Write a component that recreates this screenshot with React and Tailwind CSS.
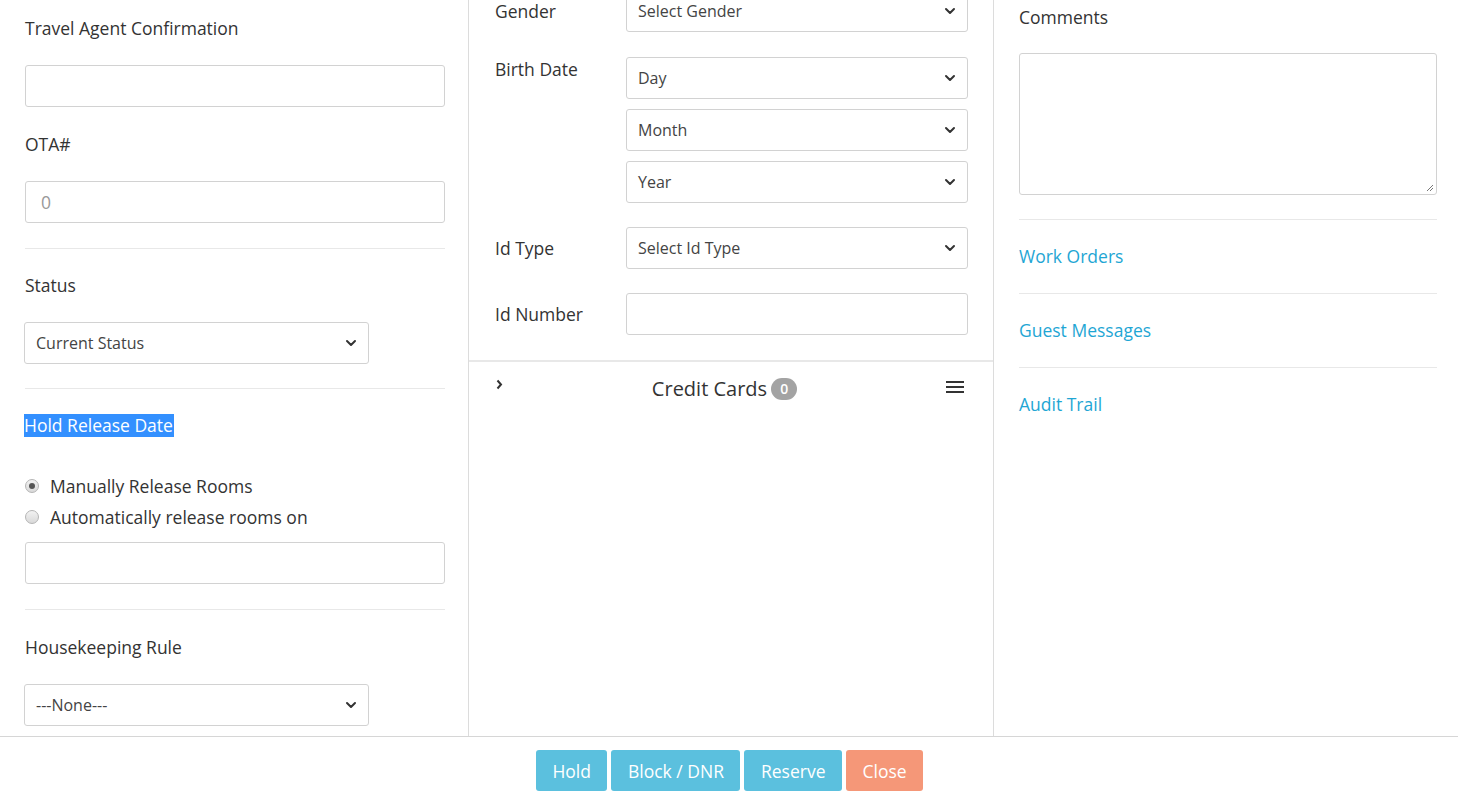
import { ChevronDown } from "lucide-react"

const font = { fontFamily: "'Open Sans', sans-serif" }

const Select = ({ label, className = "" }) => (
  <div className={"relative h-[42px] border border-[#d2d2d2] rounded-[3px] bg-white flex items-center pl-[11px] text-[16px] text-[#444] " + className}>
    <span>{label}</span>
    <ChevronDown className="absolute right-[9px] top-1/2 -translate-y-1/2 text-[#333]" size={16} strokeWidth={3} />
  </div>
)

const Input = ({ placeholder = "", className = "" }) => (
  <div className={"h-[42px] border border-[#d2d2d2] rounded-[3px] bg-white flex items-center pl-[15px] text-[17.5px] text-[#999] " + className}>
    {placeholder}
  </div>
)

const Hr = () => <div className="h-px bg-[#e8e8e8]"></div>

const Radio = ({ checked, label }) => (
  <div className="flex items-center gap-[11px] h-[31px]">
    <span className="w-[14px] h-[14px] rounded-full border border-[#b5b5b5] bg-gradient-to-b from-[#f2f2f2] to-[#d9d9d9] flex items-center justify-center">
      {checked && <span className="w-[6px] h-[6px] rounded-full bg-[#555]"></span>}
    </span>
    <span>{label}</span>
  </div>
)

const Row = ({ label, children, top = false }) => (
  <div className={"flex " + (top ? "items-start" : "items-center")}>
    <div className={"w-[131px] shrink-0 " + (top ? "pt-[1px]" : "")}>{label}</div>
    <div className="flex-1">{children}</div>
  </div>
)

export default function App() {
  return (
    <div style={font} className="w-[1458px] h-[800px] flex flex-col bg-white text-[17.5px] leading-[22px] text-[#333] overflow-hidden">
      <div className="flex h-[736px]">
        {/* left column */}
        <div className="w-[469px] border-r border-[#dcdcdc] pl-[25px] pr-[23px] pt-[17px]">
          <div>Travel Agent Confirmation</div>
          <Input className="mt-[26px]" />
          <div className="mt-[26px]">OTA#</div>
          <Input className="mt-[26px]" placeholder="0" />
          <div className="mt-[25px]"><Hr /></div>
          <div className="mt-[25px]">Status</div>
          <Select label="Current Status" className="mt-[26px] w-[345px] -ml-px" />
          <div className="mt-[24px]"><Hr /></div>
          <div className="mt-[25px] flex">
            <span className="bg-[#3390ff] text-white leading-[23px] -ml-px pr-px">Hold Release Date</span>
          </div>
          <div className="mt-[33px]">
            <Radio checked label="Manually Release Rooms" />
            <Radio label="Automatically release rooms on" />
          </div>
          <Input className="mt-[10px]" />
          <div className="mt-[25px]"><Hr /></div>
          <div className="mt-[26px]">Housekeeping Rule</div>
          <Select label="---None---" className="mt-[26px] w-[345px] -ml-px" />
        </div>

        {/* middle column */}
        <div className="w-[525px] border-r border-[#dcdcdc] flex flex-col">
          <div className="pl-[26px] pr-[25px] -mt-[10px] flex flex-col">
            <Row label="Gender"><Select label="Select Gender" /></Row>
            <div className="mt-[25px]">
              <Row label="Birth Date" top>
                <div className="flex flex-col gap-[10px]">
                  <Select label="Day" />
                  <Select label="Month" />
                  <Select label="Year" />
                </div>
              </Row>
            </div>
            <div className="mt-[24px]"><Row label="Id Type"><Select label="Select Id Type" /></Row></div>
            <div className="mt-[24px]"><Row label="Id Number"><Input /></Row></div>
          </div>
          <div className="mt-[25px] h-[2px] bg-[#e8e8e8]"></div>
          <div className="flex items-center justify-between pl-[27px] pr-[29px] pt-[14px]">
            <svg width="7" height="11" viewBox="0 0 7 11" className="-mt-[9px]">
              <path d="M1.5 1.5 L5 5.5 L1.5 9.5" fill="none" stroke="#333" strokeWidth="2" />
            </svg>
            <div className="flex items-center gap-[4px]">
              <span className="text-[20px] leading-[26px] text-[#333]">Credit Cards</span>
              <span className="h-[22px] px-[9px] rounded-[11px] bg-[#a3a3a3] text-white text-[14px] leading-[22px] font-semibold">0</span>
            </div>
            <svg width="18" height="14" viewBox="0 0 18 14" className="-mt-[4px]">
              <rect x="0" y="1" width="18" height="2" fill="#333" />
              <rect x="0" y="6" width="18" height="2" fill="#333" />
              <rect x="0" y="11" width="18" height="2" fill="#333" />
            </svg>
          </div>
        </div>

        {/* right column */}
        <div className="flex-1 pl-[25px] pr-[21px] pt-[6px]">
          <div>Comments</div>
          <div className="mt-[25px] h-[142px] border border-[#d2d2d2] rounded-[3px] relative">
            <svg width="8" height="8" viewBox="0 0 8 8" className="absolute right-[2px] bottom-[2px]">
              <path d="M7 1 L1 7 M7 4 L4 7" stroke="#777" strokeWidth="1" />
            </svg>
          </div>
          <div className="mt-[24px]"><Hr /></div>
          {["Work Orders", "Guest Messages", "Audit Trail"].map((t, i) => (
            <div key={t}>
              <div className="pt-[25px] pb-[26px] text-[#1fa6d4]">{t}</div>
              {i < 2 && <Hr />}
            </div>
          ))}
        </div>
      </div>

      {/* footer */}
      <div className="flex-1 border-t border-[#d6d6d6] flex justify-center gap-[4px] pt-[13px] pl-[1px]">
        <button className="h-[41px] px-[16.5px] rounded-[3px] bg-[#5bc0de] text-white">Hold</button>
        <button className="h-[41px] px-[16.5px] rounded-[3px] bg-[#5bc0de] text-white">Block / DNR</button>
        <button className="h-[41px] px-[16.5px] rounded-[3px] bg-[#5bc0de] text-white">Reserve</button>
        <button className="h-[41px] px-[16.5px] rounded-[3px] bg-[#f59778] text-white">Close</button>
      </div>
    </div>
  )
}
